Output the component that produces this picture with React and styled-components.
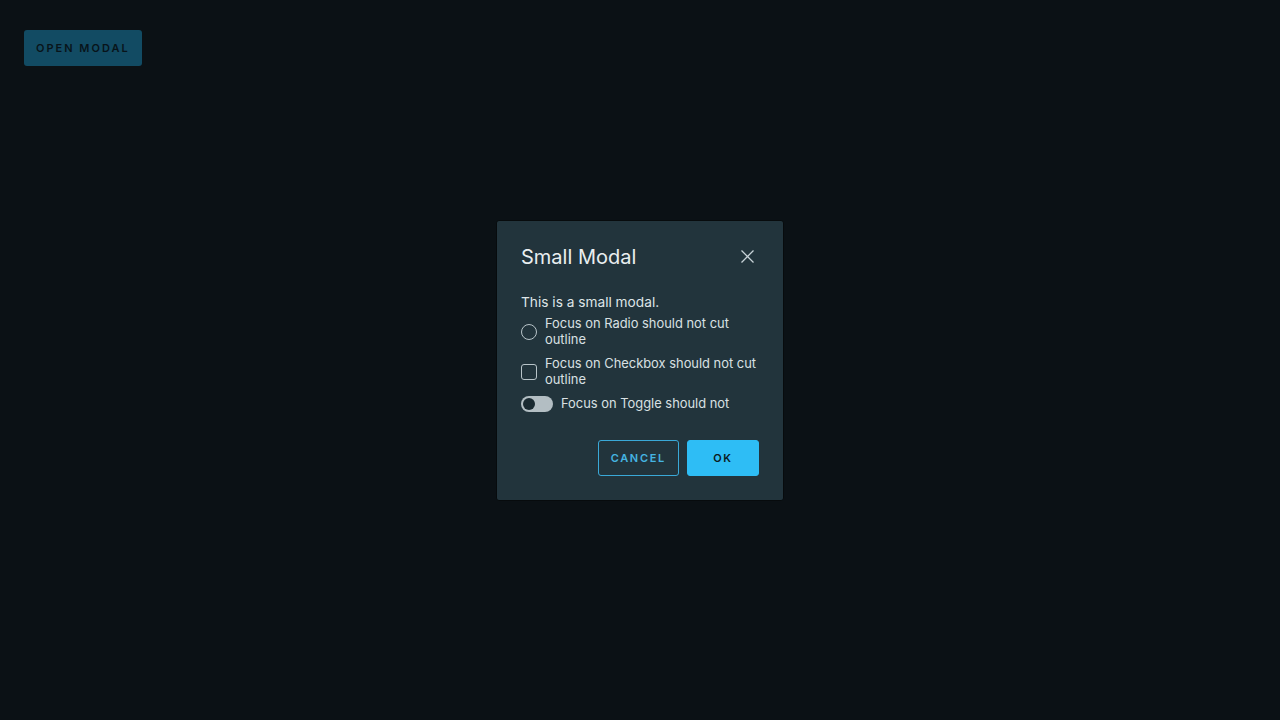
import React from 'react';
import styled, { createGlobalStyle } from 'styled-components';

const GlobalStyle = createGlobalStyle`
  html, body {
    margin: 0;
    padding: 0;
    background: #0b1115;
    font-family: Inter, "Noto Sans", sans-serif;
  }
`;

const Page = styled.div`
  position: relative;
  width: 1280px;
  height: 720px;
  background: #0b1115;
  padding: 30px 24px;
  box-sizing: border-box;
`;

const OpenButton = styled.button`
  height: 36px;
  padding: 0 12px;
  border: none;
  border-radius: 3px;
  background: #124b63;
  color: #08141a;
  font-family: inherit;
  font-weight: 600;
  font-size: 11px;
  letter-spacing: 2px;
  text-transform: uppercase;
`;

const Backdrop = styled.div`
  position: absolute;
  inset: 0;
  display: flex;
  align-items: center;
  justify-content: center;
`;

const Dialog = styled.div`
  width: 288px;
  box-sizing: border-box;
  background: #22343c;
  border: 1px solid #070b0d;
  border-radius: 3px;
  padding: 24px 24px 24px;
  color: #e3e8ea;
`;

const Header = styled.div`
  display: flex;
  align-items: center;
  justify-content: space-between;
  height: 24px;
`;

const Title = styled.h3`
  margin: 0;
  font-size: 20px;
  line-height: 24px;
  font-weight: 400;
  color: #e9eef0;
`;

const CloseButton = styled.button`
  background: none;
  border: none;
  padding: 0;
  width: 24px;
  height: 24px;
  display: flex;
  align-items: center;
  justify-content: center;
  color: #c7d2d7;
`;

const Body = styled.div`
  margin-top: 23px;
`;

const Intro = styled.p`
  margin: 0 0 4px;
  font-size: 13.7px;
  line-height: 20px;
  color: #dfe5e8;
`;

const Option = styled.label`
  display: flex;
  align-items: center;
  gap: 8px;
  font-size: 12.9px;
  line-height: 16px;
  color: #d9e0e3;
  & + & {
    margin-top: 8px;
  }
`;

const Radio = styled.span`
  flex: none;
  width: 14px;
  height: 14px;
  border: 1px solid #b8c4c9;
  border-radius: 50%;
`;

const Checkbox = styled.span`
  flex: none;
  width: 14px;
  height: 14px;
  border: 1px solid #b8c4c9;
  border-radius: 3px;
`;

const Toggle = styled.span`
  flex: none;
  position: relative;
  width: 32px;
  height: 16px;
  border-radius: 8px;
  background: #b3bec3;
  &::after {
    content: '';
    position: absolute;
    left: 2px;
    top: 2px;
    width: 12px;
    height: 12px;
    border-radius: 50%;
    background: #1a2a31;
  }
`;

const Footer = styled.div`
  display: flex;
  justify-content: flex-end;
  gap: 8px;
  margin-top: 28px;
`;

const Button = styled.button`
  height: 36px;
  box-sizing: border-box;
  padding: 0 12px;
  min-width: 72px;
  border-radius: 3px;
  font-family: inherit;
  font-weight: 600;
  font-size: 11px;
  letter-spacing: 1.7px;
  text-transform: uppercase;
  border: 1px solid ${p => (p.primary ? '#2ebdf5' : '#3aa9d8')};
  background: ${p => (p.primary ? '#2ebdf5' : 'transparent')};
  color: ${p => (p.primary ? '#0b1a20' : '#45b4e2')};
`;

export default function App() {
  return (
    <Page>
      <GlobalStyle />
      <OpenButton>Open Modal</OpenButton>
      <Backdrop>
        <Dialog>
          <Header>
            <Title>Small Modal</Title>
            <CloseButton aria-label="Close">
              <svg width="13" height="13" viewBox="0 0 13 13">
                <path d="M0.5 0.5 L12.5 12.5 M12.5 0.5 L0.5 12.5" stroke="currentColor" strokeWidth="1.3" fill="none" />
              </svg>
            </CloseButton>
          </Header>
          <Body>
            <Intro>This is a small modal.</Intro>
            <Option>
              <Radio />
              <span>Focus on Radio should not cut outline</span>
            </Option>
            <Option>
              <Checkbox />
              <span>Focus on Checkbox should not cut outline</span>
            </Option>
            <Option>
              <Toggle />
              <span>Focus on Toggle should not</span>
            </Option>
          </Body>
          <Footer>
            <Button>Cancel</Button>
            <Button primary>OK</Button>
          </Footer>
        </Dialog>
      </Backdrop>
    </Page>
  );
}
